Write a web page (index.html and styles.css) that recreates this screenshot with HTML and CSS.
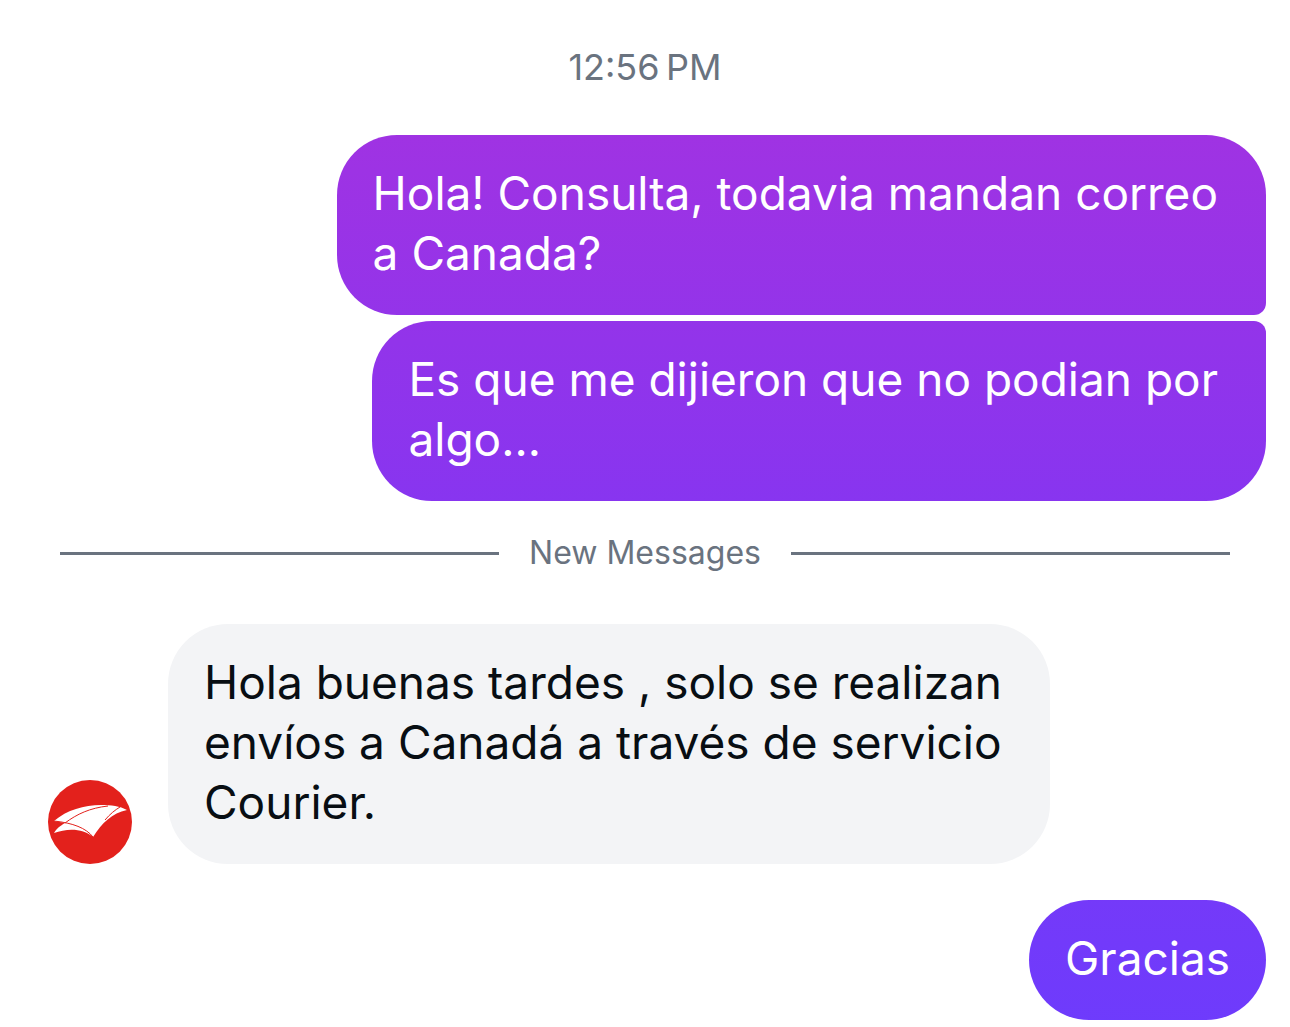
FILE: index.html
```
<!DOCTYPE html>
<html lang="es">
<head>
    <meta charset="UTF-8">
    <meta name="viewport" content="width=device-width, initial-scale=1.0">
    <title>Chat</title>
    <link rel="stylesheet" href="styles.css">
</head>
<body>
    <main class="chat">
        <time class="time" datetime="12:56">12:56&#8239;PM</time>

        <!-- sent messages -->
        <div class="group sent">
            <p class="bubble multiline first">Hola! Consulta, todavia mandan correo<br>a Canada?</p>
            <p class="bubble multiline last">Es que me dijieron que no podian por<br>algo...</p>
        </div>

        <div class="divider"><span>New Messages</span></div>

        <!-- received message -->
        <div class="received">
            <svg class="avatar" viewBox="0 0 84 84" role="img" aria-label="Correo">
                <circle cx="42" cy="42" r="42" fill="#e3211c"/>
                <path d="M6 41C19 30 36 25 53 25C63 25 72 26 79 30C64 33 54 43 45 57C35 48 19 48 6 53C9 48 12 46 17 43Z" fill="#fff"/>
                <path d="M6 41C25 43 38 48 45 57" fill="none" stroke="#e3211c" stroke-width="1"/>
                <path d="M17 43C29 34 42 28 60 26M57 40C62 34 67 30 72 27" fill="none" stroke="#e3211c" stroke-width="1"/>
            </svg>
            <p class="bubble multiline">Hola buenas tardes , solo se realizan<br>envíos a Canadá a través de servicio<br>Courier.</p>
        </div>

        <div class="group sent">
            <p class="bubble">Gracias</p>
        </div>
    </main>
</body>
</html>
```
FILE: styles.css
```
* {
    box-sizing: border-box;
}

body {
    margin: 0;
    background-color: #fff;
    font-family: Inter, "Liberation Sans", sans-serif;
}

.chat {
    padding: 45px 24px 0;
}

.time {
    display: block;
    color: #6a737f;
    font-size: 36px;
    line-height: 44px;
    text-align: center;
    margin-bottom: 46px;
}

.group {
    display: flex;
    flex-direction: column;
    gap: 6px;
}

.sent {
    align-items: flex-end;
}

.bubble {
    margin: 0;
    padding: 28px 36px 32px;
    border-radius: 60px;
    background-color: #f3f4f6;
    color: #080e13;
    font-size: 46px;
    line-height: 60px;
}

.multiline {
    padding-right: 48px;
}

/* one gradient shared by all sent bubbles */
.sent .bubble {
    background: linear-gradient(#a832de 0%, #8735f0 50%, #6e3bfc 100%) fixed;
    color: #fff;
}

.sent .first {
    border-bottom-right-radius: 12px;
}

.sent .last {
    border-top-right-radius: 12px;
}

.divider {
    display: flex;
    align-items: center;
    gap: 30px;
    margin: 31px 36px 50px;
    color: #6a737f;
    font-size: 32px;
    line-height: 42px;
}

.divider::before,
.divider::after {
    content: "";
    flex: 1;
    height: 3px;
    background-color: #6a737f;
}

.received {
    display: flex;
    align-items: flex-end;
    gap: 36px;
    margin: 0 24px 36px;
}

.avatar {
    flex: none;
    width: 84px;
    height: 84px;
}
```
